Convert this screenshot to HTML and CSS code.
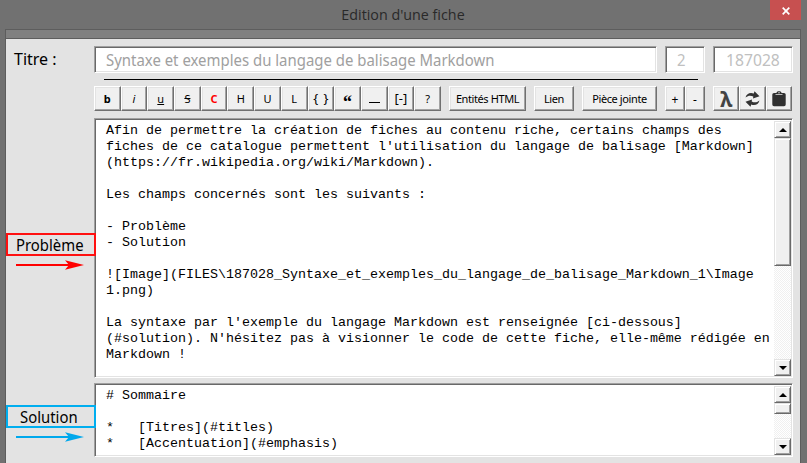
FILE: index.html
```
<!DOCTYPE html>
<html lang="fr">
<head>
<meta charset="utf-8">
<title>Edition d'une fiche</title>
<link rel="stylesheet" href="styles.css">
</head>
<body>
<div class="window">
  <header class="titlebar">
    <h1>Edition d'une fiche</h1>
    <button class="close" aria-label="Fermer"><svg width="8" height="8" viewBox="0 0 8 8"><path d="M.7.7 7.3 7.3M7.3.7.7 7.3" stroke="#fff" stroke-width="1.7"/></svg></button>
  </header>
  <main class="client">
    <div class="band"></div>
    <div class="form">
      <aside class="labels">
        <span class="titre">Titre :</span>
        <div class="tag problem"><span>Problème</span></div>
        <svg class="arrow red" width="68" height="10" viewBox="0 0 68 10"><path d="M0 5H54" stroke="currentColor" stroke-width="2"/><path d="M49 .2 68 5 49 9.8 53 5Z" fill="currentColor"/></svg>
        <div class="tag solution"><span>Solution</span></div>
        <svg class="arrow blue" width="68" height="10" viewBox="0 0 68 10"><path d="M0 5H54" stroke="currentColor" stroke-width="2"/><path d="M49 .2 68 5 49 9.8 53 5Z" fill="currentColor"/></svg>
      </aside>
      <section class="content">
        <div class="fields">
          <div class="field title"><span>Syntaxe et exemples du langage de balisage Markdown</span></div>
          <div class="field count"><span>2</span></div>
          <div class="field id"><span>187028</span></div>
        </div>
        <div class="rule"></div>
        <div class="toolbar">
          <div class="group format">
            <button><b>b</b></button><button><i>i</i></button><button><u>u</u></button><button><s>S</s></button><button class="color"><b>C</b></button><button>H</button><button>U</button><button>L</button><button class="big braces">{ }</button><button class="quote">“</button><button><span class="dash"></span></button><button class="big">[-]</button><button>?</button>
          </div>
          <div class="group entities"><button><span>Entités HTML</span></button></div>
          <div class="group link"><button><span>Lien</span></button></div>
          <div class="group attach"><button><span>Pièce jointe</span></button></div>
          <div class="group zoom"><button class="sign">+</button><button class="sign">-</button></div>
          <div class="group icons">
            <button class="lambda">λ</button>
            <button aria-label="Actualiser"><svg width="15" height="16" viewBox="0 0 15 16" fill="#333"><path d="M.5 6.500C1.500 2.500 5 1 8.800 2.400L9.500.3 14.500 5.300 8 7.500 8.300 5.600C5.500 4.200 3.500 4.300 .5 6.500Z"/><path d="M14.500 9.500C13.500 13.500 10 15 6.200 13.600L5.500 15.700.5 10.700 7 8.500 6.700 10.400C9.500 11.800 11.500 11.700 14.500 9.500Z"/></svg></button>
            <button aria-label="Presse-papiers"><svg width="14" height="16" viewBox="0 0 14 16"><path d="M2 2h2.500C4.500.8 5.500.2 7 .2s2.500.6 2.500 1.800H12q1.700 0 1.700 1.600v10q0 1.700-1.700 1.700H2Q.3 15.300.3 13.600v-10Q.3 2 2 2Z" fill="#303030"/><path d="M3.500 3.500h7" stroke="#bbb"/><circle cx="7" cy="1.700" r=".7" fill="#eee"/></svg></button>
          </div>
        </div>
        <div class="editor first">
<pre>Afin de permettre la création de fiches au contenu riche, certains champs des
fiches de ce catalogue permettent l'utilisation du langage de balisage [Markdown]
(https://fr.wikipedia.org/wiki/Markdown).

Les champs concernés sont les suivants :

- Problème
- Solution

![Image](FILES\187028_Syntaxe_et_exemples_du_langage_de_balisage_Markdown_1\Image
1.png)

La syntaxe par l'exemple du langage Markdown est renseignée [ci-dessous]
(#solution). N'hésitez pas à visionner le code de cette fiche, elle-même rédigée en
Markdown !</pre>
          <div class="scrollbar"><div class="step up"></div><div class="thumb"></div><div class="track"></div><div class="step down"></div></div>
        </div>
        <div class="editor second">
<pre># Sommaire

*   [Titres](#titles)
*   [Accentuation](#emphasis)</pre>
          <div class="scrollbar"><div class="step up"></div><div class="thumb"></div><div class="track"></div><div class="step down"></div></div>
        </div>
      </section>
    </div>
  </main>
</div>
</body>
</html>
```
FILE: styles.css
```
* { box-sizing: border-box; }
body { margin: 0; background: #717171; font-family: "Noto Sans", "Open Sans", sans-serif; overflow: hidden; }
button { font: inherit; padding: 0; margin: 0; }
svg { display: block; flex: none; }
.window { width: 807px; height: 463px; display: flex; flex-direction: column; }
.titlebar { height: 29px; display: grid; grid-template-columns: 1fr 31px; padding-right: 6px; flex: none; }
.titlebar h1 { margin: 0; padding-left: 36px; text-align: center; font: 400 14.3px/30px "Open Sans", sans-serif; color: #292929; }
.close { width: 31px; height: 20px; border: 0; background: #c75050; display: flex; align-items: center; justify-content: center; padding-top: 1px; }
.client { flex: 1; margin: 0 6px 0 5px; border: solid #5d5d5d; border-width: 1px 1px 0; background: #e3e3e3; min-height: 0; }
.band { height: 9px; background: #808080; border-bottom: 1px solid #5d5d5d; }
.form { display: grid; grid-template-columns: 88px 698px; }
.labels { display: flex; flex-direction: column; padding-top: 9px; font-size: 16px; line-height: 22px; color: #000; }
.titre { margin-left: 8px; }
.tag { width: 90px; height: 23px; border: 2px solid; display: flex; align-items: center; padding-left: 8px; z-index: 1; }
.tag span { color: #000; white-space: nowrap; transform: scaleX(.93); transform-origin: 0 50%; }
.problem { border-color: #ff1010; margin-top: 163px; }
.solution { border-color: #00aeef; margin-top: 135px; padding-left: 12px; }
.arrow { margin: 4px 0 0 10px; }
.red { color: #f00; }
.blue { color: #00a8ec; }
.content { padding-top: 7px; min-width: 0; }
.fields { display: flex; gap: 8px; height: 27px; width: 699px; }
.field { border: 1px solid; border-color: #a0a0a0 #fff #fff #a0a0a0; background: #fff; display: flex; align-items: center; box-shadow: inset 1px 1px #696969, inset -1px -1px #e3e3e3; color: #a0a0a0; font-size: 16px; white-space: nowrap; line-height: 20px; }
.field span { transform: scaleX(.933); transform-origin: 0 50%; }
.title { width: 563px; padding-left: 11px; }
.count { width: 40px; padding-left: 11px; color: #c0c0c0; }
.id { width: 80px; padding-left: 12px; color: #c0c0c0; }
.id span { transform: scaleX(.98); }
.rule { width: 594px; height: 1px; margin: 6px 0 6px 10px; background: #000; }
.toolbar { height: 25px; display: flex; gap: 8px; }
.group { display: flex; }
.group button { flex: 1 1 0; min-width: 0; border: 1px solid; border-color: #fff #707070 #707070 #fff; box-shadow: inset -1px -1px #a3a3a3, inset 1px 1px #e3e3e3; background: #f0f0f0; display: flex; align-items: center; justify-content: center; font-size: 11px; line-height: 15px; color: #000; white-space: nowrap; }
.format { width: 347px; }
.entities { width: 77px; }
.link { width: 40px; }
.attach { width: 75px; }
.zoom { width: 40px; }
.icons { width: 79px; }
.group button > span { letter-spacing: -.4px; }
.group .color { color: #f00; }
.group .big { font-size: 13px; }
.group .braces { word-spacing: 2px; }
.group .quote { font: 700 18px/15px "Liberation Serif", serif; padding-top: 8px; }
.group .sign { font-size: 12px; padding-top: 2px; }
.dash { width: 11px; height: 1px; background: #000; margin-top: 8px; }
.group .lambda { font: 700 21px/22px "Noto Sans", sans-serif; color: #444; }
.editor { display: flex; justify-content: space-between; border: 1px solid; border-color: #a0a0a0 #fff #fff #a0a0a0; background: #fff; box-shadow: inset 1px 1px #696969, inset -1px -1px #e3e3e3; width: 699px; }
.first { height: 260px; margin-top: 7px; }
.second { height: 74px; margin-top: 5px; }
.editor pre { margin: 0; padding: 4px 0 0 11px; font: 13.333px/16px "Liberation Mono", monospace; color: #000; }
.scrollbar { width: 17px; margin: 2px 1px 1px 0; display: flex; flex-direction: column; flex: none; }
.step, .thumb { background: #f0f0f0; border: 1px solid; border-color: #e3e3e3 #696969 #696969 #e3e3e3; box-shadow: inset 1px 1px #fff, inset -1px -1px #a0a0a0; flex: none; }
.step { height: 17px; display: flex; align-items: center; justify-content: center; }
.step::before { content: ""; border: solid transparent; border-width: 0 4px 4px; border-bottom-color: #000; }
.down::before { border-width: 4px 4px 0; border-top-color: #000; }
.first .thumb { height: 128px; }
.second .thumb { height: 11px; }
.track { flex: 1; background: repeating-conic-gradient(#fff 0 25%, #f0f0f0 0 50%) 0 0 / 2px 2px; }
```
